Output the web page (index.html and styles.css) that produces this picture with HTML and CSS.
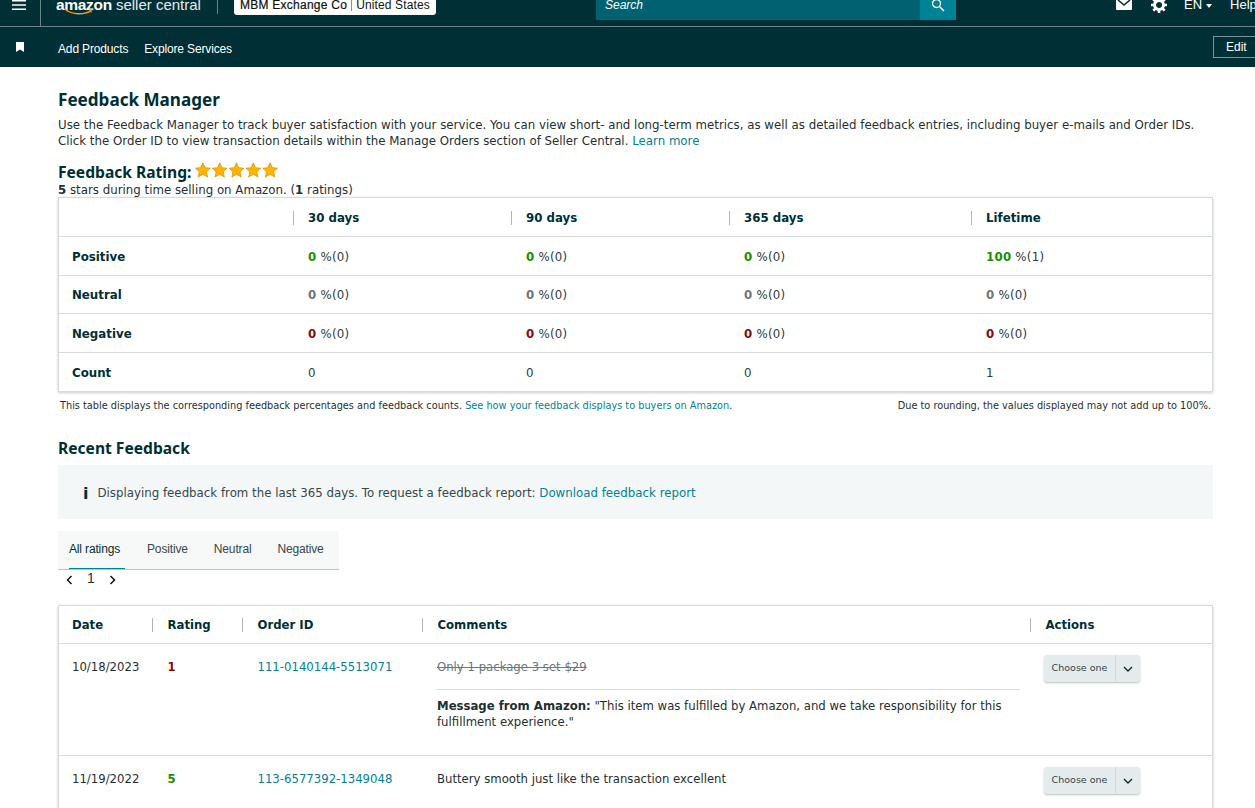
FILE: index.html
```html
<!DOCTYPE html>
<html lang="en">
<head>
<meta charset="utf-8">
<title>Feedback Manager</title>
<link rel="stylesheet" href="styles.css">
</head>
<body>
<header class="topbar">
  <div class="menu-cell"><svg class="burger" viewBox="0 0 14 12" width="14" height="12"><path d="M0 1h14v1.6H0zM0 5.2h14v1.6H0zM0 9.4h14V11H0z" fill="#fff"/></svg></div>
  <div class="logo-cell">
    <span class="logo-amazon">amazon</span><span class="logo-seller">seller central</span>
    <svg class="smile" viewBox="0 0 32 8" width="32" height="8"><path d="M1 1c8 6 20 6.500 28 1.500" fill="none" stroke="#f90" stroke-width="1.500"/><path d="M26 1l4 0-1 4z" fill="#f90"/></svg>
  </div>
  <div class="account"><b>MBM Exchange Co</b><i></i><span>United States</span></div>
  <div class="search"><span class="search-text">Search</span><span class="search-btn"><svg viewBox="0 0 14 14" width="14" height="14"><circle cx="5.500" cy="5.500" r="4" fill="none" stroke="#fff" stroke-width="1.300"/><path d="M8.500 8.500l4.500 4.500" stroke="#fff" stroke-width="1.500"/></svg></span></div>
  <div class="top-right">
    <svg class="ti-mail" viewBox="0 0 16 12" width="16" height="12"><path d="M1 0h14a1 1 0 0 1 1 1v10a1 1 0 0 1-1 1H1a1 1 0 0 1-1-1V1a1 1 0 0 1 1-1z" fill="#fff"/><path d="M2 2l6 5 6-5" fill="none" stroke="#002f36" stroke-width="1.500"/></svg>
    <svg class="ti-gear" viewBox="0 0 16 16" width="16" height="16"><circle cx="8" cy="8" r="4.500" fill="none" stroke="#fff" stroke-width="3"/><path d="M8 0v3M8 13v3M0 8h3M13 8h3M2.300 2.300l2.200 2.200M11.500 11.500l2.200 2.200M2.300 13.700l2.200-2.200M11.500 4.500l2.200-2.200" stroke="#fff" stroke-width="2.600"/></svg>
    <span class="lang">EN</span><span class="caret"></span>
    <span class="help">Help</span>
  </div>
</header>
<nav class="subbar">
  <svg class="bookmark" viewBox="0 0 8 10" width="8" height="10"><path d="M0 0h8v10L4 7.500 0 10z" fill="#fff"/></svg>
  <a class="sub-link">Add Products</a>
  <a class="sub-link">Explore Services</a>
  <button class="edit">Edit</button>
</nav>
<main class="page">
  <h1 class="title">Feedback Manager</h1>
  <p class="intro">Use the Feedback Manager to track buyer satisfaction with your service. You can view short- and long-term metrics, as well as detailed feedback entries, including buyer e-mails and Order IDs. Click the Order ID to view transaction details within the Manage Orders section of Seller Central. <a class="link">Learn more</a></p>
  <div class="rating-line">
    <span class="rating-title">Feedback Rating:</span>
    <svg class="stars" viewBox="0 0 84 16" width="83" height="16">
      <defs><path id="star" d="M8 .7l2.200 4.900 5.300.6-3.900 3.600 1.100 5.300L8 12.400l-4.700 2.700 1.100-5.300L.5 6.200l5.300-.6z" fill="#ffb400" stroke="#d98a00" stroke-width=".7"/></defs>
      <use href="#star"/><use href="#star" x="17"/><use href="#star" x="34"/><use href="#star" x="51"/><use href="#star" x="68"/>
    </svg>
  </div>
  <p class="rating-sub"><b>5</b> stars during time selling on Amazon. (<b>1</b> ratings)</p>

  <section class="card summary">
    <div class="s-row s-head"><div></div><div class="h-cell">30 days</div><div class="h-cell">90 days</div><div class="h-cell">365 days</div><div class="h-cell">Lifetime</div></div>
    <div class="s-row"><div class="label">Positive</div><div class="val"><b class="pos">0</b> %(0)</div><div class="val"><b class="pos">0</b> %(0)</div><div class="val"><b class="pos">0</b> %(0)</div><div class="val"><b class="pos">100</b> %(1)</div></div>
    <div class="s-row s-short"><div class="label">Neutral</div><div class="val"><b class="neu">0</b> %(0)</div><div class="val"><b class="neu">0</b> %(0)</div><div class="val"><b class="neu">0</b> %(0)</div><div class="val"><b class="neu">0</b> %(0)</div></div>
    <div class="s-row"><div class="label">Negative</div><div class="val"><b class="neg">0</b> %(0)</div><div class="val"><b class="neg">0</b> %(0)</div><div class="val"><b class="neg">0</b> %(0)</div><div class="val"><b class="neg">0</b> %(0)</div></div>
    <div class="s-row"><div class="label">Count</div><div class="val">0</div><div class="val">0</div><div class="val">0</div><div class="val">1</div></div>
  </section>
  <div class="notes"><span>This table displays the corresponding feedback percentages and feedback counts. <a class="link">See how your feedback displays to buyers on Amazon</a>.</span><span>Due to rounding, the values displayed may not add up to 100%.</span></div>

  <h2 class="recent">Recent Feedback</h2>
  <div class="info"><span class="info-i">i</span><span>Displaying feedback from the last 365 days. To request a feedback report: <a class="link">Download feedback report</a></span></div>

  <div class="tabs"><span class="tab active">All ratings</span><span class="tab">Positive</span><span class="tab">Neutral</span><span class="tab">Negative</span></div>
  <div class="pager">
    <svg viewBox="0 0 7 10" width="7" height="10"><path d="M5.500 1L1.500 5l4 4" fill="none" stroke="#111" stroke-width="1.500"/></svg>
    <span>1</span>
    <svg viewBox="0 0 7 10" width="7" height="10"><path d="M1.500 1l4 4-4 4" fill="none" stroke="#111" stroke-width="1.500"/></svg>
  </div>

  <section class="card feedback">
    <div class="f-row f-head"><div>Date</div><div class="h-cell">Rating</div><div class="h-cell">Order ID</div><div class="h-cell">Comments</div><div class="h-cell">Actions</div></div>
    <div class="f-row f-one">
      <div>10/18/2023</div><div><b class="neg">1</b></div><div><a class="link">111-0140144-5513071</a></div>
      <div class="comment"><s class="struck">Only 1 package 3 set $29</s><hr class="rule"><p class="message"><b>Message from Amazon:</b> "This item was fulfilled by Amazon, and we take responsibility for this fulfillment experience."</p></div>
      <div><div class="choose"><span class="choose-text">Choose one</span><span class="choose-arrow"><svg viewBox="0 0 10 6" width="10" height="6"><path d="M1 1l4 4 4-4" fill="none" stroke="#0f2a30" stroke-width="1.400"/></svg></span></div></div>
    </div>
    <div class="f-row f-two">
      <div>11/19/2022</div><div><b class="pos">5</b></div><div><a class="link">113-6577392-1349048</a></div>
      <div class="comment">Buttery smooth just like the transaction excellent</div>
      <div><div class="choose"><span class="choose-text">Choose one</span><span class="choose-arrow"><svg viewBox="0 0 10 6" width="10" height="6"><path d="M1 1l4 4 4-4" fill="none" stroke="#0f2a30" stroke-width="1.400"/></svg></span></div></div>
    </div>
  </section>
</main>
</body>
</html>
```
FILE: styles.css
```css
* { box-sizing: border-box; }
html, body { margin: 0; padding: 0; height: 808px; overflow: hidden; }
body { font-family: "DejaVu Sans", Verdana, sans-serif; font-size: 11.800px; color: #1f2f33; background: #fff; }
p, h1, h2 { margin: 0; }
.link { color: #008296; }

.topbar { height: 27px; background: #002f36; border-bottom: 1px solid #6b8286; display: flex; font-family: "Liberation Sans", Arial, sans-serif; color: #fff; overflow: hidden; position: relative; }
.menu-cell { width: 41px; border-right: 1px solid #6b8286; display: flex; justify-content: center; align-items: flex-start; margin-right: 15px; }
.burger { margin-top: -1px; margin-left: -3px; }
.logo-cell { width: 162px; height: 14px; position: relative; border-right: 1px solid #6b8286; white-space: nowrap; line-height: 10px; }
.logo-amazon { font-weight: 700; font-size: 15.500px; letter-spacing: -.3px; }
.logo-seller { font-size: 15px; margin-left: 4px; color: #e6eced; }
.smile { position: absolute; left: 8px; top: 8px; width: 30px; }
.account { margin-left: 16px; height: 15px; padding: 0 6px; background: #fff; border-radius: 0 0 3px 3px; color: #0f1111; font-size: 12px; line-height: 11px; display: flex; align-items: flex-start; white-space: nowrap; }
.account b { font-weight: 400; -webkit-text-stroke: .2px #0f1111; letter-spacing: .25px; }
.account i { width: 1px; height: 11px; background: #c68a1a; margin: 0 4px; }
.account span { letter-spacing: .13px; }
.search { position: absolute; left: 596px; top: 0; width: 360px; height: 20px; background: #006170; display: flex; justify-content: space-between; }
.search-text { font-style: italic; font-size: 12px; line-height: 10px; padding-left: 9px; }
.search-btn { width: 36px; background: #008296; display: flex; justify-content: center; }
.search-btn svg { margin-top: -2px; }
.top-right { position: absolute; left: 1116px; top: 0; display: flex; align-items: flex-start; white-space: nowrap; font-size: 13px; line-height: 10px; }
.ti-mail { margin-top: -2px; }
.ti-gear { margin-top: -3px; margin-left: 19px; }
.lang { margin-left: 17px; }
.caret { width: 0; height: 0; margin: 4px 0 0 4px; border: 3.500px solid transparent; border-top: 4px solid #fff; border-bottom: 0; }
.help { margin-left: 18px; }

.subbar { height: 40px; background: #002f36; display: flex; align-items: center; font-family: "Liberation Sans", Arial, sans-serif; font-size: 12px; letter-spacing: -.15px; color: #fff; position: relative; padding-top: 4px; }
.bookmark { margin-left: 16px; margin-right: 34px; margin-top: -5px; }
.sub-link { margin-right: 16px; }
.edit { position: absolute; left: 1213px; top: 9px; width: 50px; height: 22px; background: transparent; border: 1px solid #7d9296; color: #fff; font: 12px "Liberation Sans", Arial, sans-serif; text-align: left; padding: 0 0 0 12px; }

.page { padding: 23px 42px 0 58px; }
.title { font-family: "Noto Sans", sans-serif; font-size: 17.100px; line-height: 20px; font-weight: 700; color: #002f36; }
.intro { margin-top: 7px; line-height: 16px; }
.rating-line { margin-top: 14px; height: 20px; display: flex; align-items: flex-start; }
.rating-title { font-family: "Noto Sans", sans-serif; font-size: 15.600px; line-height: 18px; font-weight: 700; color: #002f36; }
.stars { margin-left: 4px; margin-top: -1px; }
.rating-sub { line-height: 14px; }
.card { background: #fff; border: 1px solid #d5dbdb; box-shadow: 0 1px 3px rgba(0,0,0,.2); }
.summary { height: 195px; }
.s-row { display: grid; grid-template-columns: 234px 218px 218px 242px 1fr; height: 39px; padding-top: 2px; border-top: 1px solid #d5dbdb; align-items: center; }
.s-row.s-head { border-top: 0; height: 38px; }
.s-row.s-short { height: 38px; padding-top: 0; }
.s-row > div { padding-left: 15px; color: #2b3a3d; }
.s-row > .val { letter-spacing: .25px; }
.s-row .label { padding-left: 13px; font-weight: 700; color: #002f36; }
.h-cell { position: relative; font-weight: 700; color: #002f36 !important; }
.h-cell::before { content: ""; position: absolute; left: 0; top: 50%; margin-top: -7px; height: 14px; width: 1px; background: #aab7b8; }
.pos { color: #1a8f00; }
.neu { color: #6c7778; }
.neg { color: #8b0a0a; }
.notes { display: flex; justify-content: space-between; padding: 0 2px; margin-top: 7px; font-size: 9.750px; line-height: 13px; }
.recent { font-family: "Noto Sans", sans-serif; margin-top: 26px; font-size: 15.600px; line-height: 20px; font-weight: 700; color: #002f36; }
.info { margin-top: 7px; height: 54px; background: #f3f7f8; display: flex; align-items: center; padding: 2px 0 0 25px; color: #37474a; }
.info-i { font-weight: 700; font-size: 16px; color: #002f36; margin-right: 9px; }
.tabs { margin-top: 12px; width: 281px; height: 39px; background: #f7f8f8; border-bottom: 1px solid #bcc4c5; display: flex; font-family: "Liberation Sans", Arial, sans-serif; font-size: 12px; letter-spacing: -.15px; line-height: 36px; color: #37474a; padding-left: 11px; white-space: nowrap; }
.tab { flex: none; margin-right: 26px; height: 38px; }
.tab.active { color: #002f36; border-bottom: 1px solid #008296; width: 56px; margin-right: 22px; }
.pager { display: flex; align-items: center; height: 18px; padding: 2px 0 0 8px; font: 14px "Liberation Sans", Arial, sans-serif; }
.pager span { margin: -5px 14px 0 14px; }
.feedback { margin-top: 17px; height: 230px; border-bottom: 0; }
.f-row { display: grid; grid-template-columns: 93px 90px 180px 608px 1fr; border-top: 1px solid #d5dbdb; color: #1f2f33; font-size: 11.700px; }
.f-row > div { padding: 15px 10px 0 15.500px; line-height: 16px; min-width: 0; }
.f-row > div:first-child { padding-left: 13px; }
.f-head { border-top: 0; height: 37px; align-items: center; font-weight: 700; color: #002f36; }
.f-head > div { padding-top: 0; }
.f-one { height: 112px; }
.f-two { height: 60px; }
.f-row > .comment { padding-left: 15px; }
.struck { color: #6c7778; }
.rule { border: 0; border-top: 1px solid #d5dbdb; margin: 14px 0 8px; }
.f-row .choose { display: flex; width: 96px; height: 27px; margin: -4px 0 0 -2px; background: #e3ebec; border-radius: 3px; box-shadow: 0 1px 2px rgba(0,0,0,.25); font-size: 9.500px; line-height: 26px; color: #37474a; }
.choose-text { width: 72px; text-align: center; border-right: 1px solid #cfd9da; padding-left: 1px; }
.choose-arrow { flex: 1; display: flex; align-items: center; justify-content: center; }
```
